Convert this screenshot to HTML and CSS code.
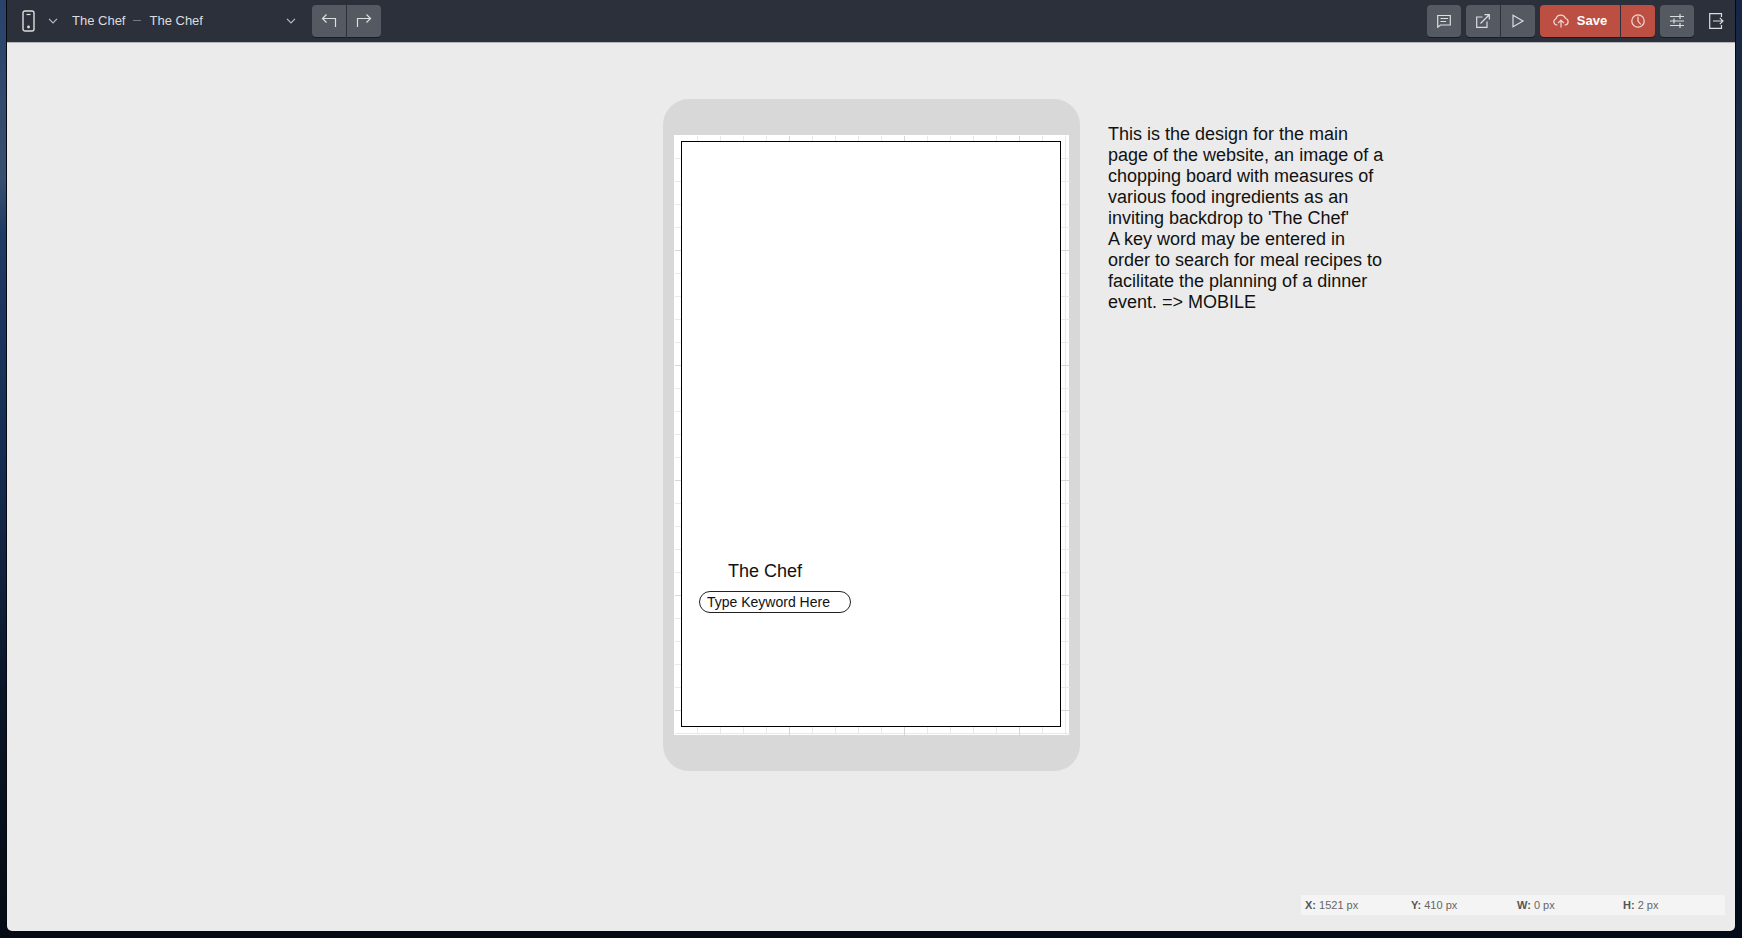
FILE: index.html
```html
<!DOCTYPE html>
<html lang="en">
<head>
<meta charset="utf-8">
<title>The Chef – The Chef</title>
<link rel="stylesheet" href="styles.css">
</head>
<body>
<div class="window">
  <header class="toolbar">
    <button class="device" aria-label="Device">
      <svg width="13" height="22" viewBox="0 0 13 22"><rect x="1" y="1" width="11" height="20" rx="2" stroke-width="1.4"/><path d="M4.500 4.500h4"/><circle cx="6.500" cy="17" r="1.400" class="solid"/></svg>
      <svg class="chevron" width="10" height="6" viewBox="0 0 10 6"><path d="M1 .8l4 4 4-4"/></svg>
    </button>
    <button class="page-picker">
      <span>The Chef</span><span class="dash"></span><span>The Chef</span>
      <svg class="chevron" width="10" height="6" viewBox="0 0 10 6"><path d="M1 .8l4 4 4-4"/></svg>
    </button>
    <div class="group">
      <button class="tool" aria-label="Undo"><svg width="16" height="14" viewBox="0 0 16 14"><path d="M5.500.5L1.500 4.500l4 4M1.500 4.500H14.500V13"/></svg></button>
      <button class="tool" aria-label="Redo"><svg width="16" height="14" viewBox="0 0 16 14"><path d="M10.500.5l4 4-4 4M14.500 4.500H1.500V13"/></svg></button>
    </div>
    <div class="actions">
      <div class="group">
        <button class="tool" aria-label="Comments"><svg width="14" height="14" viewBox="0 0 14 14"><path d="M.7 1.500h12.600v9.500H3.500L.7 13.200zM3.500 4.500h7.500M3.500 7.500h5.500"/></svg></button>
      </div>
      <div class="group">
        <button class="tool" aria-label="Share"><svg width="14" height="14" viewBox="0 0 14 14"><path d="M6.500 3H.7v10.300H11V7.500M4.500 9.500L13 1M8.500.7h4.800v4.800"/></svg></button>
        <button class="tool" aria-label="Preview"><svg width="14" height="14" viewBox="0 0 14 14"><path d="M2 1.200L12 7 2 12.800z"/></svg></button>
      </div>
      <div class="group">
        <button class="tool danger save"><svg width="16" height="14" viewBox="0 0 16 14"><path d="M4.500 11H3.800A3.200 3.200 0 0 1 3 4.800 5 5 0 0 1 12.500 4.500 3.300 3.300 0 0 1 12.200 11H11.500M8 13.500V6.500M5 9.200l3-3 3 3"/></svg><span>Save</span></button>
        <button class="tool danger" aria-label="History"><svg width="14" height="14" viewBox="0 0 14 14"><circle cx="7" cy="7" r="6.200"/><path d="M7 2.500V7l2.800 3.500"/></svg></button>
      </div>
      <div class="group">
        <button class="tool" aria-label="Settings"><svg width="14" height="16" viewBox="0 0 14 16"><path d="M0 3.500h14M0 8h14M0 12.500h14M10 1v5M4 5.500v5M10 10v5"/></svg></button>
      </div>
      <button class="exit" aria-label="Exit"><svg width="15" height="16" viewBox="0 0 15 16"><path d="M12.500 4V.7H.7v14.600h11.800V12M4 8h10M10.800 4.800L14 8l-3.200 3.200"/></svg></button>
    </div>
  </header>
  <main class="canvas">
    <section class="phone">
      <div class="screen">
        <div class="grid"></div>
        <div class="frame">
          <h1 class="title">The Chef</h1>
          <input class="keyword" type="text" aria-label="Keyword" value="Type Keyword Here">
        </div>
      </div>
    </section>
    <p class="note">This is the design for the main page of the website, an image of a chopping board with measures of various food ingredients as an inviting backdrop to 'The Chef'<br>A key word may be entered in order to search for meal recipes to facilitate the planning of a dinner event. =&gt; MOBILE</p>
  </main>
  <footer class="status">
    <span><b>X:</b> 1521 px</span><span><b>Y:</b> 410 px</span><span><b>W:</b> 0 px</span><span><b>H:</b> 2 px</span>
  </footer>
</div>
</body>
</html>
```

FILE: styles.css
```css
* { box-sizing: border-box; }

body {
  margin: 0;
  height: 100vh;
  padding: 0 7px 7px;
  background:
    linear-gradient(to right, transparent, rgba(3, 10, 30, .5)),
    linear-gradient(#28426a, #38506f 19%, #1f3a64 25%, #152c50 50%, #0a1526 75%, #040b14);
  font-family: "Liberation Sans", Arial, sans-serif;
}

.window {
  display: flex;
  flex-direction: column;
  height: 100%;
  overflow: hidden;
  background: #ebebeb;
  border-radius: 0 0 5px 5px;
  box-shadow: 0 0 0 1px #05080e;
}

button {
  display: flex;
  align-items: center;
  padding: 0;
  border: 0;
  background: none;
  color: #dcdddf;
  font: 13px/16px "Liberation Sans", Arial, sans-serif;
}

svg { fill: none; stroke: #dcdddf; stroke-width: 1.2; }
.solid { fill: #dcdddf; stroke: none; }

.toolbar {
  display: flex;
  align-items: flex-start;
  height: 43px;
  padding: 5px 11px 0 15px;
  background: #2c303b;
  border-bottom: 1px solid #b4b5b8;
}

.device { gap: 13px; height: 31px; }
.chevron { stroke: #b9bbc0; }

.page-picker { width: 224px; height: 31px; margin: 0 16px 0 14px; }
.page-picker .chevron { margin-left: auto; }
.dash { width: 8px; height: 1px; margin: 0 8px; background: #777a82; }

.group { display: flex; gap: 1px; }

.tool {
  justify-content: center;
  width: 34px;
  height: 32px;
  background: #555962;
  box-shadow: 0 1px 0 #191c23;
}
.group .tool:first-child { border-radius: 4px 0 0 4px; }
.group .tool:last-child { border-radius: 0 4px 4px 0; }
.group .tool:only-child { border-radius: 4px; }

.group .danger { background: #bc4f42; }
.danger svg { stroke: #f3dad7; }
.save { gap: 8px; width: 80px; color: #fff; font-weight: bold; }

.actions { display: flex; gap: 5px; margin-left: auto; }
.exit { height: 32px; margin-left: 10px; }

.canvas {
  display: grid;
  grid-template-columns: 1fr auto 1fr;
  align-items: start;
  flex: 1;
  padding: 56px 0 0 1px;
}

.phone {
  grid-column: 2;
  width: 417px;
  padding: 36px 11px;
  background: #d8d8d8;
  border-radius: 26px;
}

.screen {
  display: grid;
  height: 600px;
  background: #fff;
}

.grid, .frame { grid-area: 1 / 1; }

.grid {
  margin: 1px -1px -1px 1px;
  background:
    linear-gradient(to right, transparent 114px, #d6d6d6 114px) 0 0 / 115px 100%,
    linear-gradient(to bottom, transparent 114px, #d6d6d6 114px) 0 0 / 100% 115px,
    linear-gradient(to right, transparent 22px, #e9e9e9 22px) 0 0 / 23px 100%,
    linear-gradient(to bottom, transparent 22px, #e9e9e9 22px) 0 0 / 100% 23px;
}

.frame {
  margin: 6px 8px 8px 7px;
  padding: 419px 17px 0;
  background: #fff;
  border: 1px solid #000;
}

.title {
  margin: 0 0 9px 29px;
  color: #111;
  font-size: 18px;
  font-weight: normal;
  line-height: 21px;
}

.keyword {
  display: block;
  width: 152px;
  height: 22px;
  padding: 0 7px;
  color: #111;
  background: #fff;
  border: 1px solid #222;
  border-radius: 11px;
  font: 14px/20px "Liberation Sans", Arial, sans-serif;
}

.note {
  width: 284px;
  margin: 25px 0 0 28px;
  color: #111;
  font-size: 18px;
  line-height: 21px;
}

.status {
  display: grid;
  grid-template-columns: repeat(4, 106px);
  align-self: flex-end;
  margin: 0 10px 16px;
  padding: 0 4px;
  width: 424px;
  color: #666;
  background: #f4f4f4;
  font-size: 11px;
  line-height: 20px;
}
.status b { color: #555; }
```
